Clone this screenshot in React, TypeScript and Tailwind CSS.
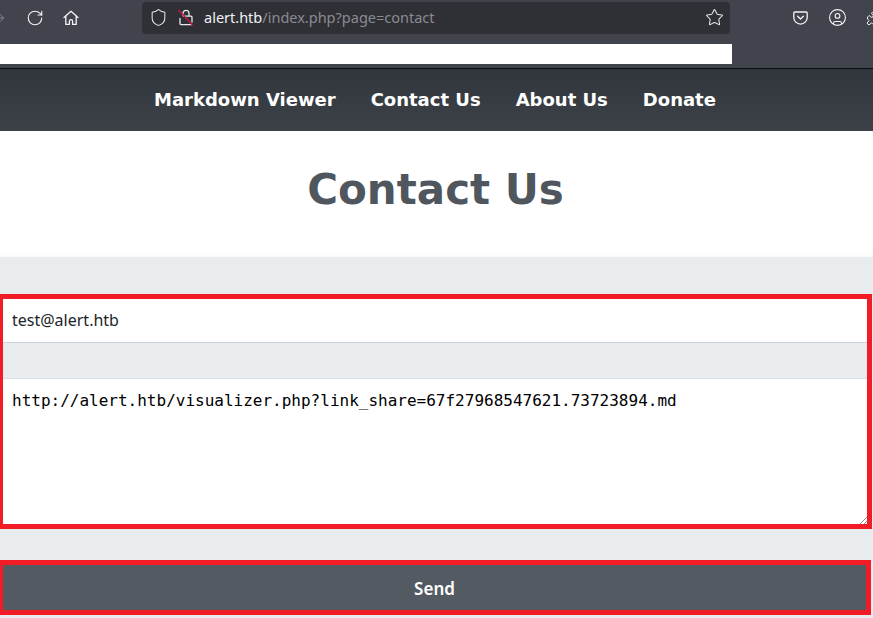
import { ArrowRight, RotateCw, Shield, Star, CircleUser, Puzzle } from 'lucide-react'

const navLinks = ['Markdown Viewer', 'Contact Us', 'About Us', 'Donate']

function HomeIcon() {
  return (
    <svg width="16" height="16" viewBox="0 0 16 16" fill="none" stroke="#f4f4f5" strokeWidth="1.3" strokeLinejoin="round" strokeLinecap="round">
      <path d="M1 7.6 8 1.2l7 6.4" />
      <path d="M2.8 6.4v8h3.6v-3.2a1.6 1.6 0 0 1 3.2 0v3.2h3.6v-8" />
    </svg>
  )
}

function BrokenLock() {
  return (
    <svg width="16" height="17" viewBox="0 0 16 17" fill="none" strokeWidth="1.3">
      <path d="M5 7V4.4a3 3 0 0 1 6 0V7" stroke="#e8e8ea" />
      <path d="M2 9v5.6a1 1 0 0 0 1 1h11M14 13.5V8.2a1 1 0 0 0-1-1H5" stroke="#e8e8ea" />
      <path d="M0.5 1 14.5 16" stroke="#c9153f" strokeWidth="1.5" />
    </svg>
  )
}

function PocketIcon() {
  return (
    <svg width="15" height="14" viewBox="0 0 15 14" fill="none" stroke="#f4f4f5" strokeWidth="1.3" strokeLinecap="round" strokeLinejoin="round">
      <path d="M1.8 1h11.4a1 1 0 0 1 1 1v4.4a6.7 6.7 0 0 1-13.4 0V2a1 1 0 0 1 1-1Z" />
      <path d="M4.6 5.2 7.5 8l2.9-2.8" />
    </svg>
  )
}

export default function App() {
  return (
    <div className="h-[618px] w-[873px] overflow-hidden bg-[#e9ecef] font-['Noto_Sans',sans-serif]">
      {/* browser chrome */}
      <div className="flex h-[34px] items-center bg-[#42444d] pt-px">
        <ArrowRight className="ml-[-9px] h-[16px] w-[16px] shrink-0 text-[#83858b]" strokeWidth={1.5} />
        <RotateCw className="ml-[19px] h-[18px] w-[18px] shrink-0 text-[#f4f4f5]" strokeWidth={1.5} />
        <div className="ml-[19px] shrink-0">
          <HomeIcon />
        </div>
        <div className="ml-[63px] flex h-[32px] w-[588px] shrink-0 items-center rounded-[4px] bg-[#2f3036] pl-[7px] pr-[6px]">
          <Shield className="h-[19px] w-[19px] text-[#e8e8ea]" strokeWidth={1.3} />
          <div className="ml-[10px]">
            <BrokenLock />
          </div>
          <span className="ml-[10px] text-[14.5px] text-[#f1f1f3]">alert.htb</span>
          <span className="text-[14.5px] text-[#8a8b90]">/index.php?page=contact</span>
          <Star className="ml-auto h-[19px] w-[19px] text-[#e8e8ea]" strokeWidth={1.3} />
        </div>
        <div className="ml-[63px] shrink-0">
          <PocketIcon />
        </div>
        <CircleUser className="ml-[20px] h-[19px] w-[19px] shrink-0 text-[#f4f4f5]" strokeWidth={1.4} />
        <Puzzle className="ml-[19px] h-[16px] w-[16px] shrink-0 text-[#f4f4f5]" strokeWidth={1.5} />
      </div>
      <div className="h-[10px] bg-[#42444d]" />
      <div className="h-[20px] bg-[#42444d]">
        <div className="h-full w-[732px] bg-white" />
      </div>
      <div className="h-[4px] bg-[#42444d]" />
      <div className="h-px bg-[#0c0c0d]" />

      {/* site nav */}
      <nav className="flex h-[62px] items-center justify-center gap-[35px] bg-gradient-to-b from-[#31363d] to-[#3d4249] pb-[2px] pr-[3px] font-['DejaVu_Sans',sans-serif] text-[18px] font-bold text-white">
        {navLinks.map((link) => (
          <a key={link}>{link}</a>
        ))}
      </nav>

      {/* page title */}
      <header className="flex h-[126px] items-center justify-center bg-white pb-[9px] pr-[2px] shadow-[inset_0_-7px_6px_-5px_rgba(0,0,0,0.03)]">
        <h1 className="font-['DejaVu_Sans',sans-serif] text-[42px] font-bold leading-[50px] text-[#4f565e]">Contact Us</h1>
      </header>

      {/* form with the red annotation boxes */}
      <form className="pt-[37px]">
        <div className="mr-px flex h-[235px] flex-col border-y-[5px] border-l-[3px] border-r-[5px] border-[#f11c26]">
          <div className="flex h-[44px] items-center border-b border-[#ced4da] bg-white pb-[2px] pl-[9px] text-[16px] text-[#212529]">
            test@alert.htb
          </div>
          <div className="h-[35px] bg-[#e9ecef]" />
          <div className="relative flex-1 border-t border-[#dee2e6] bg-white pl-[9px] pt-[11px] font-['DejaVu_Sans_Mono',monospace] text-[16px] leading-[22px] text-black">
            http://alert.htb/visualizer.php?link_share=67f27968547621.73723894.md
            <svg className="absolute bottom-0 right-0" width="7" height="7" viewBox="0 0 7 7" stroke="#8e8e8e" strokeWidth="1">
              <path d="M0 7 7 0M4 7l3-3" />
            </svg>
          </div>
        </div>
        <div className="mr-[2px] mt-[31px] flex h-[55px] items-center justify-center border-y-[5px] border-l-[3px] border-r-[5px] border-[#f11c26] bg-[#535a62] pt-[2px] text-[17px] font-semibold text-white">
          Send
        </div>
      </form>
    </div>
  )
}
